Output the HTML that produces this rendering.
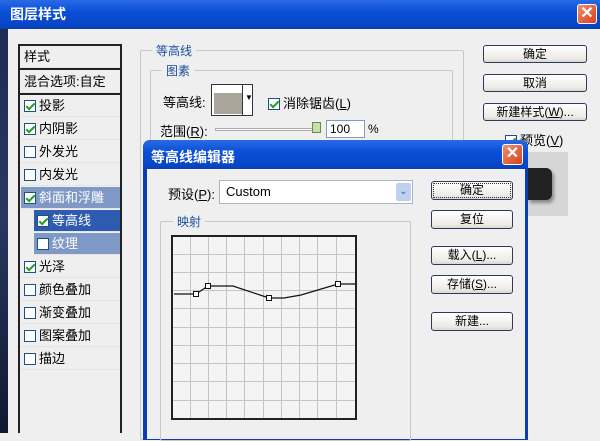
<!DOCTYPE html>
<html><head><meta charset="utf-8"><style>
*{margin:0;padding:0;box-sizing:border-box}
body{width:600px;height:433px;overflow:hidden;position:relative;background:#efefef;font-family:"Liberation Sans","Noto Sans CJK SC",sans-serif;font-size:12px;color:#000}
.a{position:absolute}
.tb{background:linear-gradient(#2a6ae6,#0a4fd6 40%,#0846c8 85%,#0a3fb0);color:#fff;font-weight:bold;font-size:14px}
.x{background:linear-gradient(135deg,#f09070,#d8401c);border:1px solid #fff;border-radius:3px;color:#fff;font-size:16px;font-weight:bold;text-align:center;line-height:18px}
.btn{border:1px solid #2a3a60;border-radius:3px;background:linear-gradient(#fff,#ecebe6 80%,#d8d6cc);text-align:center;line-height:16px;font-size:12px}
.cb{display:inline-block;width:12px;height:12px;border:1px solid #1c5180;background:#fff;vertical-align:-2px;margin-right:3px;position:relative}
.cb.c:after{content:"";position:absolute;left:3px;top:0px;width:3px;height:7px;border:solid #21a121;border-width:0 2px 2px 0;transform:rotate(45deg)}
.li{position:absolute;left:21px;width:99px;height:22px;line-height:22px;padding-left:3px;border-bottom:1px solid #e4e4e4;font-size:13px}
.gb{border:1px solid #c8c8c8;border-radius:2px}
.gl{position:absolute;background:#efefef;color:#1c4ea0;padding:0 4px;font-size:12px}
</style></head><body>
<div class="a" style="left:0;top:0;width:8px;height:433px;background:linear-gradient(#1a2a50,#283860,#101830)"></div>
<div class="a tb" style="left:0;top:0;width:600px;height:29px;padding:4px 10px;">图层样式</div>
<div class="a x" style="left:577px;top:4px;width:20px;height:20px">✕</div>
<div class="a" style="left:8px;top:29px;width:592px;height:404px;background:#efefef"></div>
<!-- left list -->
<div class="a" style="left:18px;top:44px;width:104px;height:389px;border:2px solid #222;border-bottom:none;background:#efefef"></div>
<div class="li" style="top:46px;font-size:13px">样式</div>
<div class="a" style="left:20px;top:68px;width:100px;height:2px;background:#222"></div>
<div class="li" style="top:71px">混合选项:自定</div>
<div class="a" style="left:20px;top:93px;width:100px;height:2px;background:#222"></div>
<div class="li" style="top:95px"><span class="cb c"></span>投影</div>
<div class="li" style="top:118px"><span class="cb c"></span>内阴影</div>
<div class="li" style="top:141px"><span class="cb"></span>外发光</div>
<div class="li" style="top:164px"><span class="cb"></span>内发光</div>
<div class="li" style="top:187px;background:#7f98c6;color:#fff"><span class="cb c"></span>斜面和浮雕</div>
<div class="li" style="top:210px;left:34px;width:86px;background:#2e5bb0;color:#fff"><span class="cb c"></span>等高线</div>
<div class="li" style="top:233px;left:34px;width:86px;background:#7f98c6;color:#fff"><span class="cb"></span>纹理</div>
<div class="li" style="top:256px"><span class="cb c"></span>光泽</div>
<div class="li" style="top:279px"><span class="cb"></span>颜色叠加</div>
<div class="li" style="top:302px"><span class="cb"></span>渐变叠加</div>
<div class="li" style="top:325px"><span class="cb"></span>图案叠加</div>
<div class="li" style="top:348px"><span class="cb"></span>描边</div>
<!-- outer group -->
<div class="a gb" style="left:140px;top:50px;width:324px;height:390px"></div>
<div class="gl" style="left:152px;top:42px">等高线</div>
<div class="a gb" style="left:150px;top:70px;width:303px;height:370px"></div>
<div class="gl" style="left:162px;top:62px">图素</div>
<div class="a" style="left:163px;top:92px;font-size:13px">等高线:</div>
<div class="a" style="left:211px;top:84px;width:42px;height:32px;border:1px solid #333;background:#fff"><div class="a" style="left:2px;top:8px;width:28px;height:21px;background:#aaa59a"></div><div class="a" style="left:30px;top:0;width:1px;height:30px;background:#333"></div><div class="a" style="left:33px;top:8px;font-size:8px">▼</div></div>
<div class="a" style="left:268px;top:93px;font-size:13px"><span class="cb c"></span>消除锯齿(<u>L</u>)</div>
<div class="a" style="left:160px;top:121px;font-size:13px">范围(<u>R</u>):</div>
<div class="a" style="left:215px;top:128px;width:103px;height:3px;border:1px solid #aaa;background:#fff"></div>
<div class="a" style="left:312px;top:122px;width:9px;height:11px;background:#c8e0a8;border:1px solid #6a8a50"></div>
<div class="a" style="left:326px;top:120px;width:39px;height:18px;border:1px solid #7f9db9;background:#fff;padding:1px 3px">100</div>
<div class="a" style="left:368px;top:122px">%</div>
<!-- right buttons -->
<div class="a btn" style="left:483px;top:45px;width:104px;height:18px">确定</div>
<div class="a btn" style="left:483px;top:74px;width:104px;height:18px">取消</div>
<div class="a btn" style="left:483px;top:103px;width:104px;height:18px">新建样式(<u>W</u>)...</div>
<div class="a" style="left:505px;top:130px;font-size:13px"><span class="cb c"></span>预览(<u>V</u>)</div>
<div class="a" style="left:528px;top:152px;width:40px;height:64px;background:#d6d6d6"></div>
<div class="a" style="left:528px;top:168px;width:24px;height:32px;background:#222;border-radius:0 6px 6px 0;box-shadow:2px 3px 3px #888"></div>
<!-- inner dialog -->
<div class="a" style="left:143px;top:140px;width:385px;height:300px;background:#0a3fb0;border-radius:7px 7px 0 0"></div>
<div class="a tb" style="left:143px;top:140px;width:385px;height:29px;padding:7px 8px;border-radius:7px 7px 0 0">等高线编辑器</div>
<div class="a x" style="left:502px;top:144px;width:21px;height:21px">✕</div>
<div class="a" style="left:147px;top:169px;width:378px;height:270px;background:#efefef"></div>
<div class="a" style="left:168px;top:184px;font-size:13px">预设(<u>P</u>):</div>
<div class="a" style="left:219px;top:180px;width:194px;height:24px;border:1px solid #a8b8c8;background:#fff;padding:3px 6px;font-size:13px">Custom</div>
<div class="a" style="left:396px;top:183px;width:15px;height:18px;background:#c0d0f0;border-radius:2px;color:#4060a0;font-size:10px;text-align:center;line-height:18px">⌄</div>
<div class="a btn" style="left:431px;top:181px;width:82px;height:19px;outline:1px dotted #333;outline-offset:-3px">确定</div>
<div class="a btn" style="left:431px;top:210px;width:82px;height:19px">复位</div>
<div class="a btn" style="left:431px;top:246px;width:82px;height:19px">载入(<u>L</u>)...</div>
<div class="a btn" style="left:431px;top:275px;width:82px;height:19px">存储(<u>S</u>)...</div>
<div class="a btn" style="left:431px;top:312px;width:82px;height:19px">新建...</div>
<div class="a gb" style="left:160px;top:221px;width:251px;height:220px"></div>
<div class="gl" style="left:173px;top:213px">映射</div>
<svg class="a" style="left:171px;top:235px" width="186" height="185" viewBox="0 0 186 185">
<rect x="1" y="1" width="184" height="183" fill="#f4f4f4" stroke="#222" stroke-width="2"/>
<g stroke="#c4c4c4" stroke-width="1">
<path d="M19.5 2V183M37.5 2V183M55.5 2V183M73.5 2V183M92.5 2V183M110.5 2V183M128.5 2V183M146.5 2V183M165.5 2V183"/>
<path d="M2 19.5H184M2 37.5H184M2 55.5H184M2 73.5H184M2 92.5H184M2 110.5H184M2 128.5H184M2 146.5H184M2 165.5H184"/>
</g>
<path d="M3 59H25L37 51H62L98 63H113L130 60L167 49H184" fill="none" stroke="#111" stroke-width="1.2"/>
<g fill="#fff" stroke="#111"><rect x="22.5" y="56.5" width="5" height="5"/><rect x="34.5" y="48.5" width="5" height="5"/><rect x="95.5" y="60.5" width="5" height="5"/><rect x="164.5" y="46.5" width="5" height="5"/></g>
</svg>
</body></html>
